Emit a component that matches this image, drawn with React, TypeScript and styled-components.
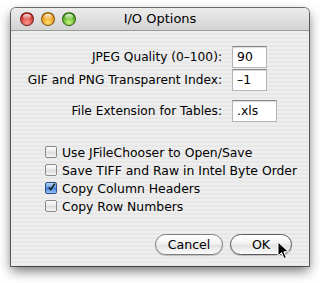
import styled, { createGlobalStyle } from "styled-components";

const GlobalStyle = createGlobalStyle`
  html, body {
    margin: 0;
    padding: 0;
    background: #fff;
  }
  body {
    font-family: "DejaVu Sans", "Liberation Sans", sans-serif;
    color: #000;
  }
`;

const Page = styled.div`
  width: 320px;
  height: 283px;
  padding: 8px 0 0 11px;
  box-sizing: border-box;
  position: relative;
  overflow: hidden;
`;

const Window = styled.div`
  width: 298px;
  height: 258px;
  border-radius: 5px 5px 0 0;
  box-shadow: 0 0 0 1px rgba(0, 0, 0, 0.55), 0 5px 12px rgba(0, 0, 0, 0.55);
  display: flex;
  flex-direction: column;
  overflow: hidden;
`;

const TitleBar = styled.div`
  height: 22px;
  flex: none;
  display: flex;
  align-items: center;
  position: relative;
  background: linear-gradient(#ececec, #d3d3d3);
  border-bottom: 1px solid #9a9a9a;
  padding-left: 9px;
  gap: 7px;
`;

const Light = styled.span<{ $c1: string; $c2: string }>`
  width: 14px;
  height: 14px;
  border-radius: 50%;
  box-sizing: border-box;
  border: 1px solid rgba(0, 0, 0, 0.45);
  background: radial-gradient(circle at 50% 80%, ${(p) => p.$c1} 0%, ${(p) => p.$c2} 75%),
    ${(p) => p.$c2};
  position: relative;
  &::after {
    content: "";
    position: absolute;
    left: 2px;
    right: 2px;
    top: 1px;
    height: 5px;
    border-radius: 50%;
    background: linear-gradient(rgba(255, 255, 255, 0.9), rgba(255, 255, 255, 0.1));
  }
`;

const Title = styled.div`
  position: absolute;
  left: 0;
  right: 0;
  top: 0;
  height: 22px;
  line-height: 22px;
  text-align: center;
  font-size: 13px;
  pointer-events: none;
`;

const Body = styled.div`
  flex: 1;
  background: repeating-linear-gradient(#eeeeee 0px, #eeeeee 2px, #e7e7e7 2px, #e7e7e7 4px);
  padding: 15px 17px 11px 0;
  display: flex;
  flex-direction: column;
`;

const Form = styled.div`
  display: grid;
  grid-template-columns: 211px auto;
  column-gap: 10px;
  row-gap: 1px;
  align-items: center;
`;

const Label = styled.label<{ $gap?: number }>`
  justify-self: end;
  font-size: 12.2px;
  white-space: nowrap;
  margin-top: ${(p) => p.$gap ?? 0}px;
`;

const Field = styled.div<{ $w: number; $gap?: number }>`
  width: ${(p) => p.$w}px;
  height: 22px;
  box-sizing: border-box;
  background: #fff;
  border: 1px solid #b5b5b5;
  border-top-color: #888;
  box-shadow: inset 0 1px 1px rgba(0, 0, 0, 0.15);
  font-size: 12.4px;
  line-height: 20px;
  padding-left: 4px;
  margin-top: ${(p) => p.$gap ?? 0}px;
`;

const Checks = styled.div`
  margin-top: 21px;
  padding-left: 34px;
  display: flex;
  flex-direction: column;
`;

const CheckRow = styled.div`
  height: 18px;
  display: flex;
  align-items: center;
  gap: 5px;
  font-size: 12.4px;
  white-space: nowrap;
`;

const Box = styled.span<{ $on?: boolean }>`
  width: 12px;
  height: 12px;
  box-sizing: border-box;
  border-radius: 2px;
  border: 1px solid ${(p) => (p.$on ? "#2d4f8a" : "#8a8a8a")};
  background: ${(p) =>
    p.$on
      ? "linear-gradient(#bcd6f7, #5a93dd 50%, #3f7fd6 51%, #9cc4f3)"
      : "linear-gradient(#ffffff, #e6e6e6 50%, #dcdcdc 51%, #f6f6f6)"};
  display: flex;
  align-items: center;
  justify-content: center;
  flex: none;
  overflow: visible;
`;

const Buttons = styled.div`
  margin-top: auto;
  display: flex;
  justify-content: flex-end;
  gap: 7px;
`;

const Button = styled.div<{ $w: number; $default?: boolean }>`
  width: ${(p) => p.$w}px;
  height: 21px;
  box-sizing: border-box;
  border-radius: 11px;
  border: 1px solid ${(p) => (p.$default ? "#5a5a5a" : "#7c7c7c")};
  background: linear-gradient(#ffffff, #f2f2f2 45%, #e3e3e3 55%, #fbfbfb);
  box-shadow: 0 1px 1px rgba(0, 0, 0, 0.2);
  display: flex;
  align-items: center;
  justify-content: center;
  font-size: 12.6px;
`;

const Cursor = styled.svg`
  position: absolute;
  left: 277px;
  top: 241px;
`;

export default function App() {
  return (
    <Page>
      <GlobalStyle />
      <Window>
        <TitleBar>
          <Light $c1="#ff9a90" $c2="#c8251e" />
          <Light $c1="#ffe070" $c2="#e18a0b" />
          <Light $c1="#c9f47c" $c2="#3f9e13" />
          <Title>I/O Options</Title>
        </TitleBar>
        <Body>
          <Form>
            <Label>JPEG Quality (0–100):</Label>
            <Field $w={35}>90</Field>
            <Label>GIF and PNG Transparent Index:</Label>
            <Field $w={35}>–1</Field>
            <Label $gap={8}>File Extension for Tables:</Label>
            <Field $w={45} $gap={8}>.xls</Field>
          </Form>
          <Checks>
            <CheckRow>
              <Box />
              Use JFileChooser to Open/Save
            </CheckRow>
            <CheckRow>
              <Box />
              Save TIFF and Raw in Intel Byte Order
            </CheckRow>
            <CheckRow>
              <Box $on>
                <svg width="12" height="12" viewBox="0 0 12 12" style={{ marginTop: -3, marginLeft: 1 }}>
                  <path d="M2.5 6.5 L5 9.5 L10.5 1.5" fill="none" stroke="#111" strokeWidth="2" />
                </svg>
              </Box>
              Copy Column Headers
            </CheckRow>
            <CheckRow>
              <Box />
              Copy Row Numbers
            </CheckRow>
          </Checks>
          <Buttons>
            <Button $w={68}>Cancel</Button>
            <Button $w={62} $default>OK</Button>
          </Buttons>
        </Body>
      </Window>
      <Cursor width="13" height="19" viewBox="0 0 13 19">
        <path d="M1 1 L1 15 L4.5 11.5 L7 17.5 L9.3 16.5 L6.8 10.8 L11.5 10.8 Z" fill="#000" stroke="#fff" strokeWidth="1" />
      </Cursor>
    </Page>
  );
}
